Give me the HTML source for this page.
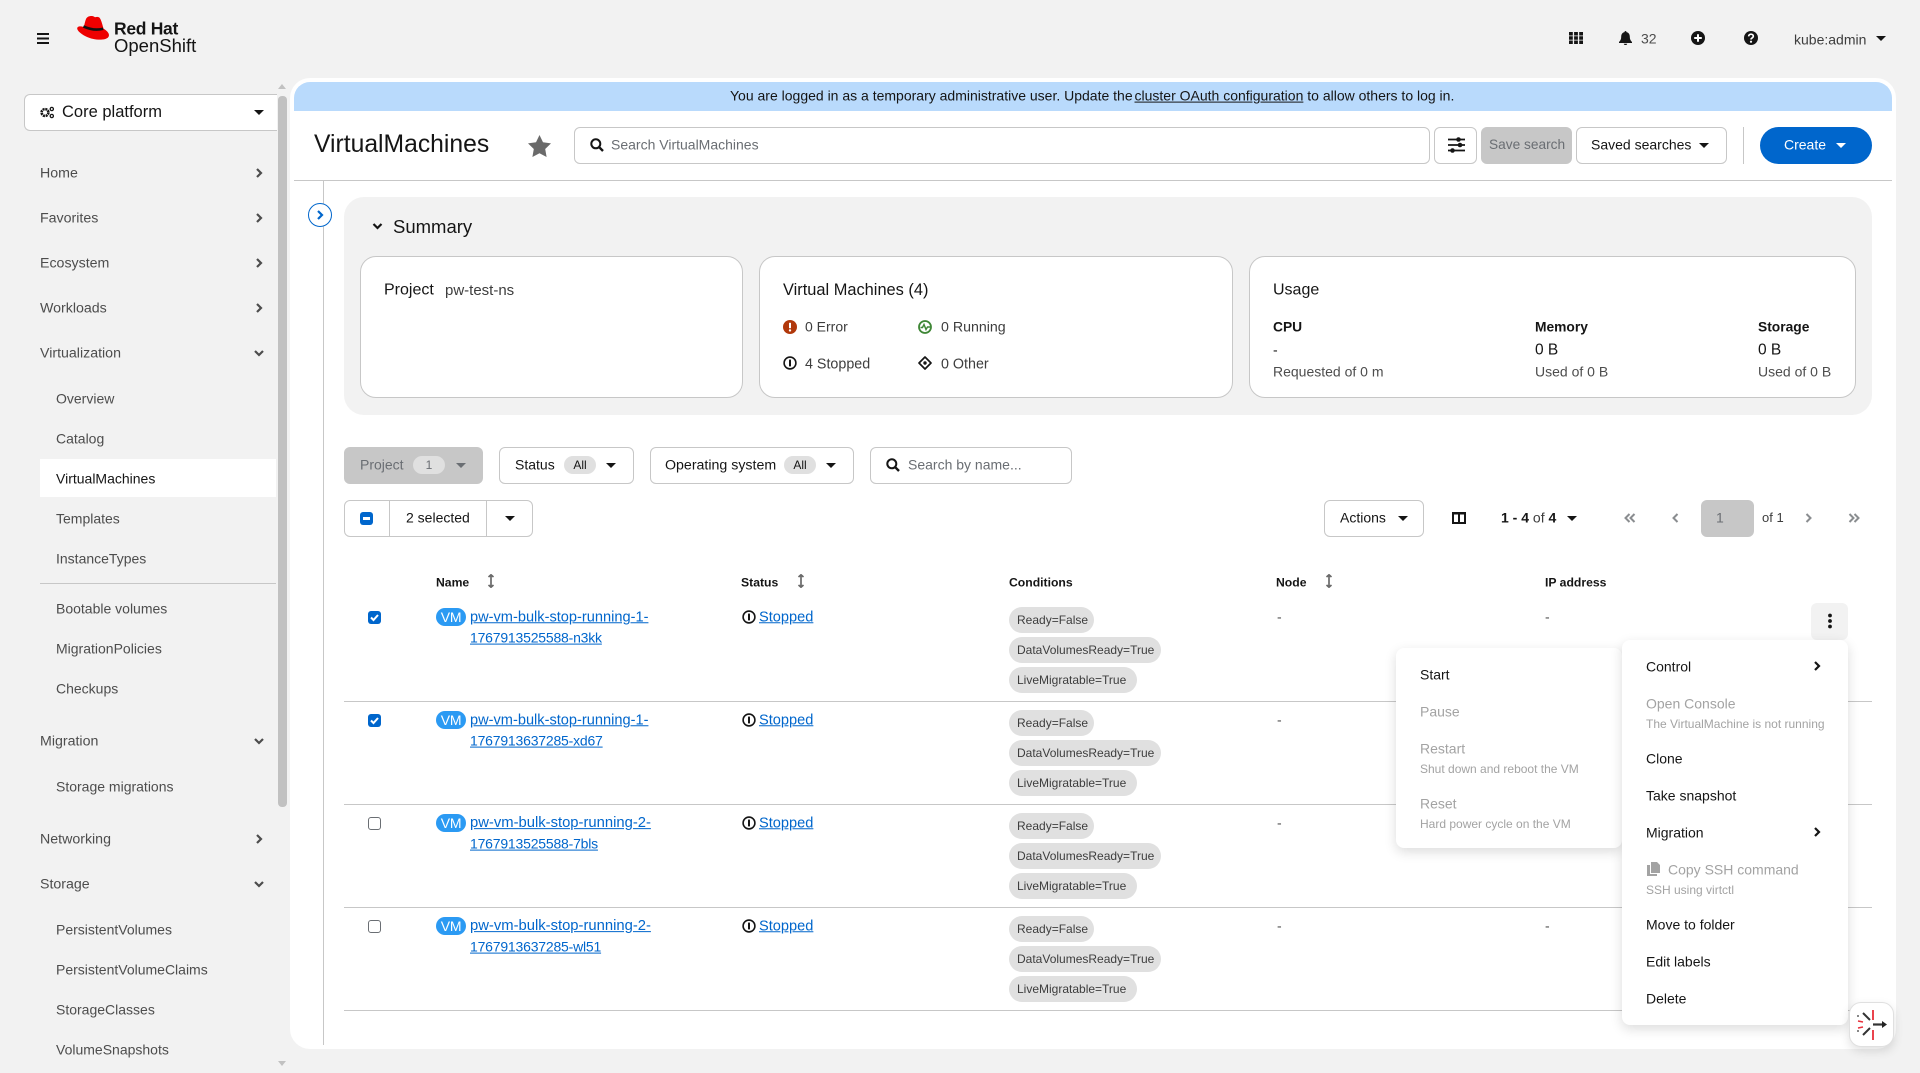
<!DOCTYPE html>
<html lang="en"><head><meta charset="utf-8"><title>VirtualMachines</title>
<style>
*{box-sizing:border-box}
html,body{margin:0;padding:0;width:1920px;height:1073px;overflow:hidden;background:#f2f2f2;font-family:"Liberation Sans",sans-serif;font-size:14px;color:#151515}
.t{position:absolute;white-space:nowrap;transform:translateY(-50%);line-height:1.2}
.b{position:absolute}
.box{position:absolute;background:#fff;border:1px solid #c7c7c7;border-radius:6px}
.nav{color:#4d4d4d;left:40px;font-size:14.2px;margin-top:1px}
.sub{color:#4d4d4d;left:56px;font-size:14px;margin-top:1px}
.caret{position:absolute;width:0;height:0;border-left:5px solid transparent;border-right:5px solid transparent;border-top:5px solid #151515}
svg.i{position:absolute;overflow:visible}
.chip{position:absolute;height:26px;background:#e0e0e0;border-radius:13px;left:1009px;font-size:12px;line-height:26px;padding-left:8px;color:#3d3d3d;white-space:nowrap}
.vm{position:absolute;left:436px;width:30px;height:18px;border-radius:9px;background:#2b9af3;color:#fff;font-size:14px;line-height:18px;text-align:center;letter-spacing:-.3px}
.lnk{color:#0066cc;text-decoration:underline;font-size:14.6px;margin-top:1px}
.lnk2{color:#0066cc;text-decoration:underline;font-size:14px;letter-spacing:-.2px}
.hd{font-weight:700;font-size:12.2px;color:#151515;margin-top:.5px}
.badge{position:absolute;height:18px;width:32px;top:456px;border-radius:9px;background:#e0e0e0;text-align:center;line-height:18px;font-size:12px}
.cb{position:absolute;left:368px;width:13px;height:13px;border-radius:3px;background:#0066cc}
.cb0{position:absolute;left:368px;width:13px;height:13px;border-radius:3px;background:#fff;border:1px solid #6a6e73}
.rule{position:absolute;left:344px;width:1528px;height:1px;background:#c7c7c7}
.menu{position:absolute;background:#fff;border-radius:8px;box-shadow:0 4px 12px rgba(0,0,0,.14)}
.mi{font-size:14px;color:#151515;margin-top:.5px}
.md{font-size:14px;color:#a3a3a3;margin-top:.5px}
.ms{font-size:12px;color:#a3a3a3;margin-top:.5px}
</style></head><body>
<svg width="0" height="0" style="position:absolute"><defs>
<symbol id="cr" viewBox="0 0 8 10"><path d="M2 1l4 4-4 4" fill="none" stroke="currentColor" stroke-width="2.2"/></symbol>
<symbol id="cd" viewBox="0 0 10 8"><path d="M1 2l4 4 4-4" fill="none" stroke="currentColor" stroke-width="2.2"/></symbol>
<symbol id="stop" viewBox="0 0 14 14"><circle cx="7" cy="7" r="5.9" fill="none" stroke="currentColor" stroke-width="1.6"/><rect x="6" y="3.4" width="2" height="7.2" rx="1" fill="currentColor"/></symbol>
<symbol id="sort" viewBox="0 0 8 14"><path d="M4 1v12M1.500 3L4 .8 6.500 3M1.500 11L4 13.200 6.500 11" fill="none" stroke="#6a6a6a" stroke-width="1.7"/></symbol>
<symbol id="srch" viewBox="0 0 14 14"><circle cx="5.8" cy="5.8" r="4.5" fill="none" stroke="#151515" stroke-width="2"/><path d="M9.2 9.2L13 13" stroke="#151515" stroke-width="2.4"/></symbol>
</defs></svg>

<!-- masthead -->
<svg class="i" style="left:37px;top:33px" width="12" height="11" viewBox="0 0 12 11"><path d="M0 1h12M0 5.500h12M0 10h12" stroke="#151515" stroke-width="2"/></svg>
<svg class="i" style="left:77px;top:16px" width="32" height="24" viewBox="0 0 32 24">
<path fill="#e00" d="M15 0c-3 0-5 .8-6 3-1 2.400-1.300 5-2.300 8C4 10.300 1.500 10 .4 11.500-.8 13.700 3 17.500 9 20.500c6.500 3.200 14 3.800 19 2.600 3.500-.9 4.500-3 3.700-5.300-.8-2.300-3.200-3.900-5.200-5.200-.8-2.800-2-7.800-3.500-10.200C22 .6 20 .8 18 1.200 17 .5 16 0 15 0z"/>
<path fill="none" stroke="#111" stroke-width="2.600" d="M6.400 10.400c5 2.300 12 4.400 19.800 2.300"/>
</svg>
<div class="t" style="left:114px;top:29px;font-weight:700;font-size:17.500px;letter-spacing:-.3px">Red Hat</div>
<div class="t" style="left:114px;top:46px;font-size:18.500px">OpenShift</div>

<svg class="i" style="left:1569px;top:32px" width="14" height="12" viewBox="0 0 14 12"><path d="M0 0h3.800v3.500H0zM5.100 0h3.800v3.500H5.100zM10.200 0H14v3.500h-3.800zM0 4.300h3.800v3.400H0zM5.100 4.300h3.800v3.400H5.100zM10.200 4.300H14v3.400h-3.800zM0 8.500h3.800V12H0zM5.100 8.500h3.800V12H5.100zM10.200 8.500H14V12h-3.800z" fill="#151515"/></svg>
<svg class="i" style="left:1619px;top:31px" width="13" height="14" viewBox="0 0 13 14"><path d="M6.500 0c.7 0 1 .5 1 1.100 2.400.5 3.300 2.500 3.300 4.600 0 2.300.6 3.700 2.200 5.300v1H0v-1c1.600-1.600 2.200-3 2.200-5.300 0-2.100.9-4.100 3.300-4.600C5.500.5 5.800 0 6.500 0zM4.800 12.700h3.400c0 .8-.8 1.300-1.700 1.300s-1.700-.5-1.700-1.300z" fill="#151515"/></svg>
<div class="t" style="left:1641px;top:39px;color:#4d4d4d;font-size:14px">32</div>
<svg class="i" style="left:1691px;top:31px" width="14" height="14" viewBox="0 0 14 14"><circle cx="7" cy="7" r="7" fill="#151515"/><path d="M7 3.200v7.600M3.200 7h7.600" stroke="#fff" stroke-width="2"/></svg>
<svg class="i" style="left:1744px;top:31px" width="14" height="14" viewBox="0 0 14 14"><circle cx="7" cy="7" r="7" fill="#151515"/><path d="M4.700 5.400c0-1.400 1-2.200 2.300-2.200s2.300.8 2.300 2c0 1.700-2.300 1.700-2.300 3.300" fill="none" stroke="#fff" stroke-width="1.700"/><circle cx="7" cy="10.700" r="1.100" fill="#fff"/></svg>
<div class="t" style="left:1794px;top:40px;color:#3d3d3d;font-size:14px">kube:admin</div>
<i class="caret" style="left:1876px;top:36px"></i>

<!-- sidebar -->
<div class="box" style="left:24px;top:94px;width:253px;height:37px;border-radius:6px 0 0 6px;border-right:none"></div>
<svg class="i" style="left:40px;top:106px" width="14" height="13" viewBox="0 0 14 13"><circle cx="5" cy="6.500" r="3.400" fill="none" stroke="#151515" stroke-width="2.600" stroke-dasharray="2 .7"/><circle cx="11.800" cy="3" r="1.600" fill="none" stroke="#151515" stroke-width="1.300"/><circle cx="11.800" cy="10" r="1.600" fill="none" stroke="#151515" stroke-width="1.300"/></svg>
<div class="t" style="left:62px;top:113px;font-size:16.500px">Core platform</div>
<i class="caret" style="left:254px;top:110px"></i>

<div class="t nav" style="top:173px">Home</div>
<div class="t nav" style="top:218px">Favorites</div>
<div class="t nav" style="top:263px">Ecosystem</div>
<div class="t nav" style="top:308px">Workloads</div>
<div class="t nav" style="top:353px">Virtualization</div>
<div class="t sub" style="top:398px">Overview</div>
<div class="t sub" style="top:438px">Catalog</div>
<div class="b" style="left:40px;top:459px;width:236px;height:38px;background:#fff"></div>
<div class="t sub" style="top:478px;color:#151515">VirtualMachines</div>
<div class="t sub" style="top:518px">Templates</div>
<div class="t sub" style="top:558px">InstanceTypes</div>
<div class="b" style="left:40px;top:583px;width:236px;height:1px;background:#c7c7c7"></div>
<div class="t sub" style="top:608px">Bootable volumes</div>
<div class="t sub" style="top:648px">MigrationPolicies</div>
<div class="t sub" style="top:688px">Checkups</div>
<div class="t nav" style="top:741px">Migration</div>
<div class="t sub" style="top:786px">Storage migrations</div>
<div class="t nav" style="top:839px">Networking</div>
<div class="t nav" style="top:884px">Storage</div>
<div class="t sub" style="top:929px">PersistentVolumes</div>
<div class="t sub" style="top:969px">PersistentVolumeClaims</div>
<div class="t sub" style="top:1009px">StorageClasses</div>
<div class="t sub" style="top:1049px">VolumeSnapshots</div>

<svg class="i" style="left:255px;top:168px;color:#4d4d4d" width="8" height="10"><use href="#cr"/></svg>
<svg class="i" style="left:255px;top:213px;color:#4d4d4d" width="8" height="10"><use href="#cr"/></svg>
<svg class="i" style="left:255px;top:258px;color:#4d4d4d" width="8" height="10"><use href="#cr"/></svg>
<svg class="i" style="left:255px;top:303px;color:#4d4d4d" width="8" height="10"><use href="#cr"/></svg>
<svg class="i" style="left:254px;top:349px;color:#4d4d4d" width="10" height="8"><use href="#cd"/></svg>
<svg class="i" style="left:254px;top:737px;color:#4d4d4d" width="10" height="8"><use href="#cd"/></svg>
<svg class="i" style="left:255px;top:834px;color:#4d4d4d" width="8" height="10"><use href="#cr"/></svg>
<svg class="i" style="left:254px;top:880px;color:#4d4d4d" width="10" height="8"><use href="#cd"/></svg>

<!-- scrollbar -->
<div class="b" style="left:278px;top:96px;width:9px;height:711px;background:#c1c1c1;border-radius:4px"></div>
<div class="b" style="left:278px;top:84px;width:0;height:0;border-left:4.500px solid transparent;border-right:4.500px solid transparent;border-bottom:5px solid #c1c1c1"></div>
<div class="b" style="left:278px;top:1061px;width:0;height:0;border-left:4.500px solid transparent;border-right:4.500px solid transparent;border-top:5px solid #c1c1c1"></div>

<!-- main panel -->
<div class="b" style="left:290px;top:78px;width:1606px;height:971px;background:#fff;border-radius:20px"></div>
<div class="b" style="left:294px;top:82px;width:1598px;height:29px;background:#b9dafc;border-radius:16px 16px 0 0"></div>
<div class="t" style="left:730px;top:96px;font-size:14px;color:#151515">You are logged in as a temporary administrative user. Update the <span style="text-decoration:underline;margin-left:-2px">cluster OAuth configuration</span> to allow others to log in.</div>

<div class="t" style="left:314px;top:145px;font-size:24.700px">VirtualMachines</div>
<svg class="i" style="left:528px;top:135px" width="23" height="22" viewBox="0 0 23 22"><path d="M11.500 0l3.500 7.300 8 1.100-5.800 5.600 1.400 8-7.100-3.800-7.100 3.800 1.400-8L0 8.400l8-1.100z" fill="#6a6a6a"/></svg>

<div class="box" style="left:574px;top:127px;width:856px;height:37px"></div>
<svg class="i" style="left:590px;top:138px" width="14" height="14"><use href="#srch"/></svg>
<div class="t" style="left:611px;top:145px;color:#6a6e73">Search VirtualMachines</div>
<div class="box" style="left:1434px;top:127px;width:43px;height:37px"></div>
<svg class="i" style="left:1448px;top:137px" width="17" height="16" viewBox="0 0 17 16"><path d="M0 2.500h17M0 8h17M0 13.500h17" stroke="#151515" stroke-width="1.700"/><circle cx="10.500" cy="2.500" r="2.300" fill="#151515"/><circle cx="12" cy="8" r="2.300" fill="#151515"/><circle cx="4.500" cy="13.500" r="2.300" fill="#151515"/></svg>
<div class="b" style="left:1481px;top:127px;width:91px;height:37px;background:#c7c7c7;border-radius:6px"></div>
<div class="t" style="left:1489px;top:145px;color:#6a6e73;font-size:13.700px">Save search</div>
<div class="box" style="left:1576px;top:127px;width:151px;height:37px"></div>
<div class="t" style="left:1591px;top:145px">Saved searches</div>
<i class="caret" style="left:1699px;top:143px"></i>
<div class="b" style="left:1743px;top:127px;width:1px;height:37px;background:#c7c7c7"></div>
<div class="b" style="left:1760px;top:127px;width:112px;height:37px;background:#0066cc;border-radius:19px"></div>
<div class="t" style="left:1784px;top:145px;color:#fff">Create</div>
<i class="caret" style="left:1836px;top:143px;border-top-color:#fff"></i>
<div class="b" style="left:294px;top:180px;width:1598px;height:1px;background:#c7c7c7"></div>

<div class="b" style="left:323px;top:181px;width:1px;height:864px;background:#c7c7c7"></div>
<div class="b" style="left:308px;top:203px;width:24px;height:24px;border-radius:50%;background:#fff;border:1.500px solid #0066cc"></div>
<svg class="i" style="left:316px;top:210px;color:#0066cc" width="8" height="10"><use href="#cr"/></svg>

<!-- summary -->
<div class="b" style="left:344px;top:197px;width:1528px;height:218px;background:#f2f2f2;border-radius:20px"></div>
<svg class="i" style="left:372px;top:222px;color:#151515" width="11" height="8"><use href="#cd"/></svg>
<div class="t" style="left:393px;top:227px;font-size:18.500px">Summary</div>

<div class="box" style="left:360px;top:256px;width:383px;height:142px;border-radius:16px"></div>
<div class="t" style="left:384px;top:290px;font-size:16px">Project</div>
<div class="t" style="left:445px;top:291px;font-size:15px;color:#3d3d3d">pw-test-ns</div>

<div class="box" style="left:759px;top:256px;width:474px;height:142px;border-radius:16px"></div>
<div class="t" style="left:783px;top:290px;font-size:16.400px;margin-top:1px">Virtual Machines (4)</div>
<svg class="i" style="left:783px;top:320px" width="14" height="14" viewBox="0 0 14 14"><circle cx="7" cy="7" r="7" fill="#b1380b"/><rect x="6" y="2.800" width="2" height="5.400" fill="#fff"/><circle cx="7" cy="10.400" r="1.200" fill="#fff"/></svg>
<div class="t" style="left:805px;top:327px;color:#3d3d3d">0 Error</div>
<svg class="i" style="left:918px;top:320px" width="14" height="14" viewBox="0 0 14 14"><circle cx="7" cy="7" r="6" fill="none" stroke="#3e8635" stroke-width="1.800"/><path d="M2.500 7.500h2l1.500-3 2 5 1.500-2.500h2.500" fill="none" stroke="#3e8635" stroke-width="1.400"/></svg>
<div class="t" style="left:941px;top:328px;color:#3d3d3d;font-size:14.200px">0 Running</div>
<svg class="i" style="left:783px;top:356px;color:#151515" width="14" height="14"><use href="#stop"/></svg>
<div class="t" style="left:805px;top:365px;color:#3d3d3d;font-size:14.300px">4 Stopped</div>
<svg class="i" style="left:918px;top:356px" width="14" height="14" viewBox="0 0 14 14"><path d="M7 1l6 6-6 6-6-6z" fill="none" stroke="#151515" stroke-width="1.700" stroke-linejoin="round"/><circle cx="7" cy="7" r="1.700" fill="#151515"/></svg>
<div class="t" style="left:941px;top:365px;color:#3d3d3d;font-size:14.300px">0 Other</div>

<div class="box" style="left:1249px;top:256px;width:607px;height:142px;border-radius:16px"></div>
<div class="t" style="left:1273px;top:290px;font-size:16px">Usage</div>
<div class="t" style="left:1273px;top:327px;font-weight:700;font-size:13.800px;margin-top:.5px">CPU</div>
<div class="t" style="left:1273px;top:350px;font-size:14px">-</div>
<div class="t" style="left:1273px;top:372px;color:#4d4d4d">Requested of 0 m</div>
<div class="t" style="left:1535px;top:327px;font-weight:700;font-size:13.800px;margin-top:.5px">Memory</div>
<div class="t" style="left:1535px;top:351px;font-size:15.500px">0 B</div>
<div class="t" style="left:1535px;top:372px;color:#4d4d4d">Used of 0 B</div>
<div class="t" style="left:1758px;top:327px;font-weight:700;font-size:13.800px;margin-top:.5px">Storage</div>
<div class="t" style="left:1758px;top:351px;font-size:15.500px">0 B</div>
<div class="t" style="left:1758px;top:372px;color:#4d4d4d">Used of 0 B</div>

<!-- filters -->
<div class="b" style="left:344px;top:447px;width:139px;height:37px;background:#c7c7c7;border-radius:6px"></div>
<div class="t" style="left:360px;top:465px;color:#6a6e73">Project</div>
<div class="badge" style="left:413px;color:#6a6e73">1</div>
<i class="caret" style="left:456px;top:463px;border-top-color:#6a6e73"></i>
<div class="box" style="left:499px;top:447px;width:135px;height:37px"></div>
<div class="t" style="left:515px;top:465px;color:#151515">Status</div>
<div class="badge" style="left:564px;font-weight:400">All</div>
<i class="caret" style="left:606px;top:463px"></i>
<div class="box" style="left:650px;top:447px;width:204px;height:37px"></div>
<div class="t" style="left:665px;top:466px;color:#151515;font-size:14.200px">Operating system</div>
<div class="badge" style="left:784px">All</div>
<i class="caret" style="left:826px;top:463px"></i>
<div class="box" style="left:870px;top:447px;width:202px;height:37px"></div>
<svg class="i" style="left:886px;top:458px" width="14" height="14"><use href="#srch"/></svg>
<div class="t" style="left:908px;top:465px;color:#6a6e73">Search by name...</div>

<div class="box" style="left:344px;top:500px;width:189px;height:37px"></div>
<div class="b" style="left:389px;top:500px;width:1px;height:37px;background:#c7c7c7"></div>
<div class="b" style="left:486px;top:500px;width:1px;height:37px;background:#c7c7c7"></div>
<div class="b" style="left:360px;top:512px;width:13px;height:13px;background:#0066cc;border-radius:3px"></div>
<div class="b" style="left:363px;top:517px;width:7px;height:2.500px;background:#fff"></div>
<div class="t" style="left:406px;top:518px;color:#151515">2 selected</div>
<i class="caret" style="left:505px;top:516px"></i>

<div class="box" style="left:1324px;top:500px;width:100px;height:37px"></div>
<div class="t" style="left:1340px;top:518px">Actions</div>
<i class="caret" style="left:1398px;top:516px"></i>
<svg class="i" style="left:1452px;top:512px" width="14" height="12" viewBox="0 0 14 12"><rect x="1" y="1" width="12" height="10" fill="none" stroke="#151515" stroke-width="2"/><path d="M1 1.500h12M7 1v10" stroke="#151515" stroke-width="2"/></svg>
<div class="t" style="left:1501px;top:518px;font-weight:700;font-size:14px">1 - 4 <span style="font-weight:400;color:#3d3d3d">of</span> 4</div>
<i class="caret" style="left:1567px;top:516px"></i>
<svg class="i" style="left:1624px;top:513px" width="12" height="10" viewBox="0 0 12 10"><path d="M5.500 1l-4 4 4 4M10.500 1l-4 4 4 4" fill="none" stroke="#8a8d90" stroke-width="2"/></svg>
<svg class="i" style="left:1672px;top:513px" width="7" height="10" viewBox="0 0 7 10"><path d="M5.500 1l-4 4 4 4" fill="none" stroke="#8a8d90" stroke-width="2"/></svg>
<div class="b" style="left:1701px;top:500px;width:53px;height:37px;background:#c7c7c7;border-radius:6px"></div>
<div class="t" style="left:1716px;top:518px;color:#6a6e73">1</div>
<div class="t" style="left:1762px;top:518px;color:#3d3d3d;font-size:13px">of 1</div>
<svg class="i" style="left:1805px;top:513px" width="7" height="10" viewBox="0 0 7 10"><path d="M1.500 1l4 4-4 4" fill="none" stroke="#8a8d90" stroke-width="2"/></svg>
<svg class="i" style="left:1848px;top:513px" width="12" height="10" viewBox="0 0 12 10"><path d="M1.500 1l4 4-4 4M6.500 1l4 4-4 4" fill="none" stroke="#8a8d90" stroke-width="2"/></svg>

<!-- table head -->
<div class="t hd" style="left:436px;top:582px">Name</div>
<svg class="i" style="left:487px;top:574px" width="8" height="14"><use href="#sort"/></svg>
<div class="t hd" style="left:741px;top:582px">Status</div>
<svg class="i" style="left:797px;top:574px" width="8" height="14"><use href="#sort"/></svg>
<div class="t hd" style="left:1009px;top:582px">Conditions</div>
<div class="t hd" style="left:1276px;top:582px">Node</div>
<svg class="i" style="left:1325px;top:574px" width="8" height="14"><use href="#sort"/></svg>
<div class="t hd" style="left:1545px;top:582px">IP address</div>

<!-- row 1 -->
<div class="cb" style="top:611px"></div><svg class="i" style="left:368px;top:611px" width="13" height="13" viewBox="0 0 13 13"><path d="M3 6.500l2.500 2.500 4.500-5" fill="none" stroke="#fff" stroke-width="2"/></svg>
<div class="vm" style="top:608px">VM</div>
<div class="t lnk" style="left:470px;top:617px">pw-vm-bulk-stop-running-1-</div>
<div class="t lnk2" style="left:470px;top:638px">1767913525588-n3kk</div>
<svg class="i" style="left:742px;top:610px;color:#151515" width="14" height="14"><use href="#stop"/></svg>
<div class="t lnk" style="left:759px;top:617px">Stopped</div>
<div class="chip" style="top:607px;width:85px">Ready=False</div>
<div class="chip" style="top:637px;width:152px">DataVolumesReady=True</div>
<div class="chip" style="top:667px;width:128px">LiveMigratable=True</div>
<div class="t" style="left:1277px;top:617px;color:#4d4d4d">-</div>
<div class="t" style="left:1545px;top:617px;color:#4d4d4d">-</div>
<div class="rule" style="top:701px"></div>

<!-- row 2 -->
<div class="cb" style="top:714px"></div><svg class="i" style="left:368px;top:714px" width="13" height="13" viewBox="0 0 13 13"><path d="M3 6.500l2.500 2.500 4.500-5" fill="none" stroke="#fff" stroke-width="2"/></svg>
<div class="vm" style="top:711px">VM</div>
<div class="t lnk" style="left:470px;top:720px">pw-vm-bulk-stop-running-1-</div>
<div class="t lnk2" style="left:470px;top:741px">1767913637285-xd67</div>
<svg class="i" style="left:742px;top:713px;color:#151515" width="14" height="14"><use href="#stop"/></svg>
<div class="t lnk" style="left:759px;top:720px">Stopped</div>
<div class="chip" style="top:710px;width:85px">Ready=False</div>
<div class="chip" style="top:740px;width:152px">DataVolumesReady=True</div>
<div class="chip" style="top:770px;width:128px">LiveMigratable=True</div>
<div class="t" style="left:1277px;top:720px;color:#4d4d4d">-</div>
<div class="rule" style="top:804px"></div>

<!-- row 3 -->
<div class="cb0" style="top:817px"></div>
<div class="vm" style="top:814px">VM</div>
<div class="t lnk" style="left:470px;top:823px;font-size:14.800px">pw-vm-bulk-stop-running-2-</div>
<div class="t lnk2" style="left:470px;top:844px">1767913525588-7bls</div>
<svg class="i" style="left:742px;top:816px;color:#151515" width="14" height="14"><use href="#stop"/></svg>
<div class="t lnk" style="left:759px;top:823px">Stopped</div>
<div class="chip" style="top:813px;width:85px">Ready=False</div>
<div class="chip" style="top:843px;width:152px">DataVolumesReady=True</div>
<div class="chip" style="top:873px;width:128px">LiveMigratable=True</div>
<div class="t" style="left:1277px;top:823px;color:#4d4d4d">-</div>
<div class="rule" style="top:907px"></div>

<!-- row 4 -->
<div class="cb0" style="top:920px"></div>
<div class="vm" style="top:917px">VM</div>
<div class="t lnk" style="left:470px;top:926px;font-size:14.800px">pw-vm-bulk-stop-running-2-</div>
<div class="t lnk2" style="left:470px;top:947px">1767913637285-wl51</div>
<svg class="i" style="left:742px;top:919px;color:#151515" width="14" height="14"><use href="#stop"/></svg>
<div class="t lnk" style="left:759px;top:926px">Stopped</div>
<div class="chip" style="top:916px;width:85px">Ready=False</div>
<div class="chip" style="top:946px;width:152px">DataVolumesReady=True</div>
<div class="chip" style="top:976px;width:128px">LiveMigratable=True</div>
<div class="t" style="left:1277px;top:926px;color:#4d4d4d">-</div>
<div class="t" style="left:1545px;top:926px;color:#4d4d4d">-</div>
<div class="rule" style="top:1010px"></div>

<!-- kebab + menus -->
<div class="b" style="left:1811px;top:603px;width:37px;height:37px;background:#f2f2f2;border-radius:6px"></div>
<svg class="i" style="left:1827px;top:613px" width="6" height="16" viewBox="0 0 6 16"><circle cx="3" cy="2.500" r="1.900" fill="#151515"/><circle cx="3" cy="8" r="1.900" fill="#151515"/><circle cx="3" cy="13.500" r="1.900" fill="#151515"/></svg>

<div class="menu" style="left:1396px;top:648px;width:226px;height:200px"></div>
<div class="t mi" style="left:1420px;top:674px">Start</div>
<div class="t md" style="left:1420px;top:711px">Pause</div>
<div class="t md" style="left:1420px;top:748px">Restart</div>
<div class="t ms" style="left:1420px;top:768px">Shut down and reboot the VM</div>
<div class="t md" style="left:1420px;top:803px">Reset</div>
<div class="t ms" style="left:1420px;top:823px">Hard power cycle on the VM</div>

<div class="menu" style="left:1622px;top:640px;width:226px;height:385px"></div>
<div class="t mi" style="left:1646px;top:666px">Control</div>
<svg class="i" style="left:1813px;top:661px;color:#151515" width="8" height="10"><use href="#cr"/></svg>
<div class="t md" style="left:1646px;top:703px">Open Console</div>
<div class="t ms" style="left:1646px;top:723px">The VirtualMachine is not running</div>
<div class="t mi" style="left:1646px;top:758px">Clone</div>
<div class="t mi" style="left:1646px;top:795px">Take snapshot</div>
<div class="t mi" style="left:1646px;top:832px">Migration</div>
<svg class="i" style="left:1813px;top:827px;color:#151515" width="8" height="10"><use href="#cr"/></svg>
<svg class="i" style="left:1647px;top:862px" width="13" height="14" viewBox="0 0 13 14"><path d="M4 0h6l3 3v8H4zM0 3h3v9h7v2H0z" fill="#a3a3a3"/></svg>
<div class="t md" style="left:1668px;top:869px">Copy SSH command</div>
<div class="t ms" style="left:1646px;top:889px">SSH using virtctl</div>
<div class="t mi" style="left:1646px;top:924px">Move to folder</div>
<div class="t mi" style="left:1646px;top:961px">Edit labels</div>
<div class="t mi" style="left:1646px;top:998px">Delete</div>

<!-- floating -->
<div class="b" style="left:1849px;top:1002px;width:45px;height:45px;background:#fff;border:1px solid #e0e0e0;border-radius:12px;box-shadow:0 4px 10px rgba(0,0,0,.12)"></div>
<svg class="i" style="left:1857px;top:1010px" width="30" height="30" viewBox="0 0 30 30">
<path d="M16 0v10M16 20v10" stroke="#e8303a" stroke-width="1.800"/>
<path d="M6 3l7 7M6 25l7-7" stroke="#333" stroke-width="2"/>
<path d="M1 11l5 1M1 18l5-1" stroke="#e8303a" stroke-width="1.600"/>
<circle cx="1" cy="6" r=".9" fill="#333"/><circle cx="1" cy="21" r=".9" fill="#333"/>
<path d="M16 14.500h11" stroke="#333" stroke-width="2.200"/><path d="M25 11l5 3.500-5 3.500z" fill="#222"/>
</svg>
</body></html>
